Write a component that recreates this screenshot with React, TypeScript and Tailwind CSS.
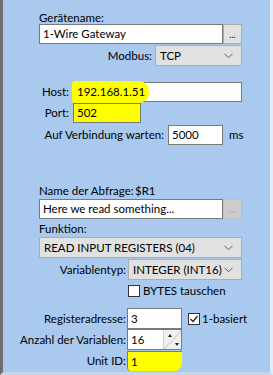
import React from "react";

const font = { fontFamily: 'Lato, "Noto Sans", "Liberation Sans", sans-serif' };

function Chevron() {
  return (
    <svg width="9" height="6" viewBox="0 0 9 6" className="shrink-0">
      <path d="M0.5 0.8 L4.5 4.8 L8.5 0.8" fill="none" stroke="#606060" strokeWidth="1" />
    </svg>
  );
}

function Select({ value, className }: { value: string; className: string }) {
  return (
    <div
      className={`flex items-center justify-between bg-[#e1e1e1] border border-[#adadad] pl-[4px] pr-[8px] ${className}`}
    >
      <span>{value}</span>
      <Chevron />
    </div>
  );
}

function Dots({ disabled }: { disabled?: boolean }) {
  return (
    <div
      className={`w-[19px] h-[20px] flex items-end justify-center pb-[4px] border ${
        disabled ? "bg-[#cccccc] border-[#bfbfbf] text-[#a0a0a0]" : "bg-[#e1e1e1] border-[#adadad] text-black"
      } text-[9px] leading-none`}
    >
      ...
    </div>
  );
}

function TextBox({ value, className, yellow }: { value: string; className: string; yellow?: boolean }) {
  return (
    <div
      className={`flex items-center border border-[#7a7a7a] pl-[3px] ${yellow ? "bg-[#ffff00]" : "bg-white"} ${className}`}
    >
      {value}
    </div>
  );
}

export default function App() {
  return (
    <div
      style={font}
      className="w-[273px] h-[375px] bg-[#a9c9ef] border-l-[3px] border-l-[#6e6e6e] border-r-[3px] border-r-[#e4ecf6] border-b-[3px] border-b-[#c9d6e6] text-[11.5px] leading-[16px] text-black overflow-hidden whitespace-nowrap"
    >
      <div className="pl-[36px] pt-[10px]">
        {/* Gerätename */}
        <div className="h-[14px]">Gerätename:</div>
        <div className="flex">
          <TextBox value="1-Wire Gateway" className="w-[184px] h-[20px]" />
          <Dots />
        </div>
        <div className="flex items-center mt-[1px]">
          <div className="w-[116px] text-right pr-[3px]">Modbus:</div>
          <Select value="TCP" className="w-[87px] h-[21px]" />
        </div>

        {/* Host / Port */}
        <div className="flex items-center mt-[16px] ml-[-36px]">
          <div className="w-[70px] text-right pr-[4px]">Host:</div>
          <div className="relative flex items-center w-[169px] h-[20px] bg-white border border-[#7a7a7a]">
            <div className="absolute left-[-2px] top-[-2px] w-[77px] h-[22px] bg-[#ffff00] rounded-r-[10px] rounded-l-[3px]" />
            <span className="relative pl-[3px]">192.168.1.51</span>
          </div>
        </div>
        <div className="flex items-center mt-[1px] ml-[-36px]">
          <div className="w-[70px] text-right pr-[4px]">Port:</div>
          <TextBox value="502" className="w-[68px] h-[20px]" yellow />
        </div>
        <div className="flex items-center mt-[2px] ml-[-36px]">
          <div className="w-[165px] text-right pr-[4px]">Auf Verbindung warten:</div>
          <TextBox value="5000" className="w-[55px] h-[20px]" />
          <div className="pl-[6px]">ms</div>
        </div>

        {/* Abfrage */}
        <div className="flex mt-[38px] h-[15px]">
          <div className="w-[96px] shrink-0">Name der Abfrage:</div>
          <div>$R1</div>
        </div>
        <div className="flex mt-[1px]">
          <TextBox value="Here we read something..." className="w-[184px] h-[20px]" />
          <Dots disabled />
        </div>
        <div className="h-[15px] mt-[2px]">Funktion:</div>
        <Select value="READ INPUT REGISTERS (04)" className="w-[203px] h-[21px] mt-[1px]" />
        <div className="flex items-center mt-[1px]">
          <div className="w-[89px] text-right pr-[2px]">Variablentyp:</div>
          <Select value="INTEGER (INT16)" className="w-[114px] h-[21px]" />
        </div>
        <div className="flex items-center mt-[3px] ml-[89px] gap-[3px]">
          <div className="w-[12px] h-[12px] bg-white border border-[#333333]" />
          <span>BYTES tauschen</span>
        </div>

        {/* Register */}
        <div className="flex items-center mt-[9px] ml-[-36px]">
          <div className="w-[124px] text-right pr-[1px]">Registeradresse:</div>
          <TextBox value="3" className="w-[55px] h-[21px]" />
          <div className="flex items-center ml-[6px] gap-[2px]">
            <div className="w-[12px] h-[12px] bg-white border border-[#333333] flex items-center justify-center">
              <svg width="10" height="10" viewBox="0 0 10 10">
                <path d="M1.5 5 L4 7.5 L8.5 2" fill="none" stroke="#222" strokeWidth="1.2" />
              </svg>
            </div>
            <span>1-basiert</span>
          </div>
        </div>
        <div className="flex items-center ml-[-36px]">
          <div className="w-[124px] text-right pr-[1px]">Anzahl der Variablen:</div>
          <div className="flex w-[55px] h-[21px] bg-white border border-[#7a7a7a]">
            <div className="flex-1 pl-[3px] flex items-center">16</div>
            <div className="relative w-[18px] h-full bg-[#f0f0f0] border-l border-[#d0d0d0] overflow-hidden">
              <svg width="18" height="19" viewBox="0 0 18 19" className="absolute inset-0">
                <path d="M18 0 L0 19" stroke="#c8c8c8" strokeWidth="1" />
                <path d="M4 7 L6 4 L8 7 Z" fill="#222" />
                <path d="M11 13 L13 16 L15 13 Z" fill="#222" />
              </svg>
            </div>
          </div>
        </div>
        <div className="flex items-center mt-[1px] ml-[-36px]">
          <div className="w-[124px] text-right pr-[1px]">Unit ID:</div>
          <div className="relative w-[55px] h-[20px] bg-[#ffff00] border-l border-t border-[#7a7a7a] rounded-br-[8px] rounded-bl-[4px] flex items-center pl-[3px]">
            1
          </div>
        </div>
      </div>
    </div>
  );
}
